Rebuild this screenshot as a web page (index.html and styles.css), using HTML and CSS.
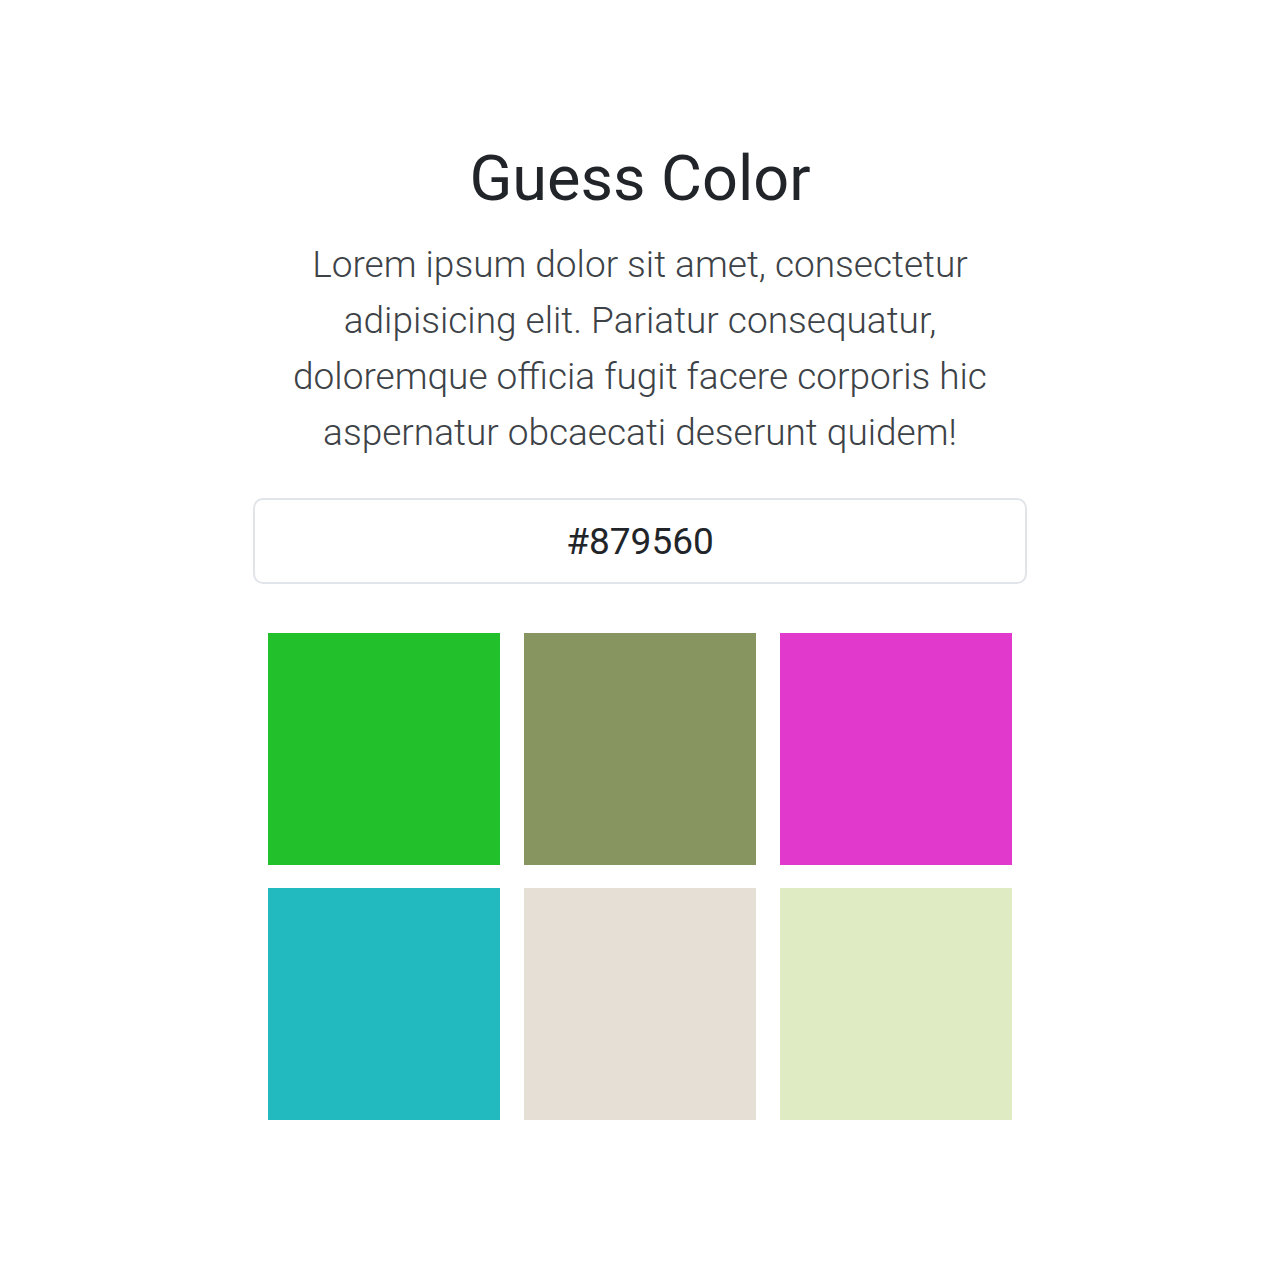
FILE: index.html
```html
<!DOCTYPE html>
<html lang="en">
<head>
<meta charset="utf-8">
<title>Guess Color</title>
<link rel="stylesheet" href="styles.css">
</head>
<body>
<main class="container">
  <h1 class="title">Guess Color</h1>
  <p class="lead">Lorem ipsum dolor sit amet, consectetur adipisicing elit. Pariatur consequatur, doloremque officia fugit facere corporis hic aspernatur obcaecati deserunt quidem!</p>
  <div class="hex-box">#879560</div>
  <div class="grid">
    <div class="swatch" style="background:#22c02a"></div>
    <div class="swatch" style="background:#879560"></div>
    <div class="swatch" style="background:#e239cd"></div>
    <div class="swatch" style="background:#23babf"></div>
    <div class="swatch" style="background:#e6dfd5"></div>
    <div class="swatch" style="background:#dfebc3"></div>
  </div>
</main>
</body>
</html>
```

FILE: styles.css
```css
html, body {
  margin: 0;
  padding: 0;
  background: #ffffff;
}
body {
  font-family: Roboto, "Liberation Sans", sans-serif;
  color: #212529;
}
.container {
  width: 774px;
  margin: 0 auto;
  padding-top: 140px;
  display: flex;
  flex-direction: column;
  align-items: center;
}
.title {
  margin: 0;
  font-size: 63px;
  font-weight: 400;
  line-height: 77px;
  color: #212529;
  text-align: center;
}
.lead {
  margin: 20px 0 0;
  max-width: 774px;
  font-size: 37px;
  font-weight: 300;
  line-height: 56px;
  color: #3d4247;
  text-align: center;
}
.hex-box {
  box-sizing: border-box;
  margin-top: 37px;
  width: 100%;
  height: 86px;
  border: 2px solid #e1e4e8;
  border-radius: 10px;
  display: flex;
  align-items: center;
  justify-content: center;
  font-size: 37px;
  font-weight: 400;
  color: #212529;
}
.grid {
  margin-top: 49px;
  width: 744px;
  display: grid;
  grid-template-columns: repeat(3, 232px);
  grid-auto-rows: 232px;
  column-gap: 24px;
  row-gap: 23px;
}
.swatch {
  width: 232px;
  height: 232px;
}
```
